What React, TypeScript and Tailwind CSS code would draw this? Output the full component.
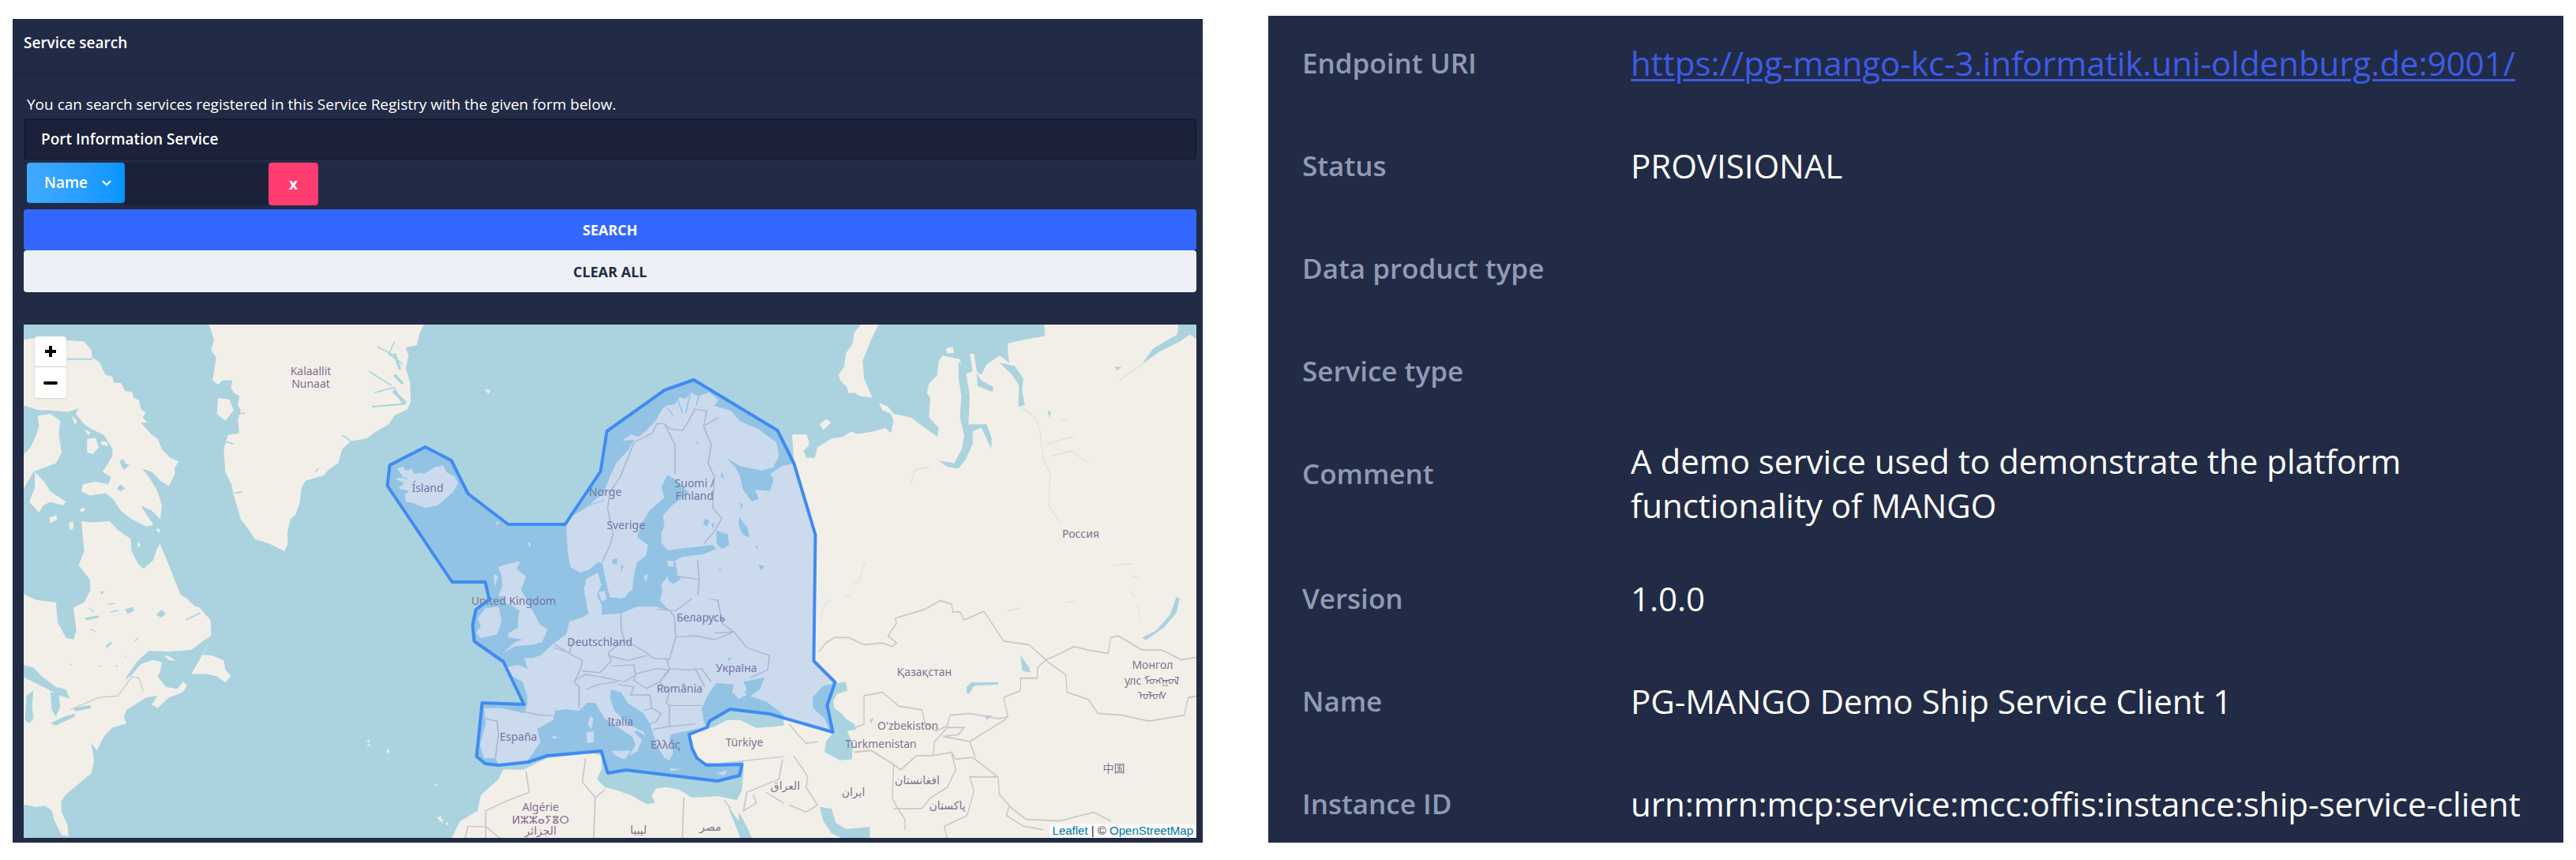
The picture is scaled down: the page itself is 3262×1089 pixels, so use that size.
import { ChevronDown, Minus, Plus } from "lucide-react";
import { clsx } from "clsx";

interface DetailRow {
  label: string;
  lines: string[];
  href?: string;
}

interface MapLabel {
  text: string;
  x: number;
  y: number;
}

const details: DetailRow[] = [
  {
    label: "Endpoint URI",
    lines: ["https://pg-mango-kc-3.informatik.uni-oldenburg.de:9001/"],
    href: "https://pg-mango-kc-3.informatik.uni-oldenburg.de:9001/",
  },
  { label: "Status", lines: ["PROVISIONAL"] },
  { label: "Data product type", lines: [] },
  { label: "Service type", lines: [] },
  {
    label: "Comment",
    lines: [
      "A demo service used to demonstrate the platform",
      "functionality of MANGO",
    ],
  },
  { label: "Version", lines: ["1.0.0"] },
  { label: "Name", lines: ["PG-MANGO Demo Ship Service Client 1"] },
  {
    label: "Instance ID",
    lines: ["urn:mrn:mcp:service:mcc:offis:instance:ship-service-client"],
  },
];

const mapLabels: MapLabel[] = [
  { text: "Kalaallit", x: 394, y: 475 },
  { text: "Nunaat", x: 394, y: 491 },
  { text: "Ísland", x: 542, y: 623 },
  { text: "Norge", x: 767, y: 628 },
  { text: "Sverige", x: 793, y: 670 },
  { text: "Suomi /", x: 880, y: 617 },
  { text: "Finland", x: 880, y: 633 },
  { text: "United Kingdom", x: 651, y: 766 },
  { text: "Беларусь", x: 888, y: 787 },
  { text: "Deutschland", x: 760, y: 818 },
  { text: "Україна", x: 933, y: 851 },
  { text: "România", x: 861, y: 877 },
  { text: "Italia", x: 786, y: 919 },
  { text: "España", x: 657, y: 938 },
  { text: "Ελλάς", x: 843, y: 948 },
  { text: "Türkiye", x: 943, y: 945 },
  { text: "Algérie", x: 685, y: 1027 },
  { text: "ⵍⵣⵣⴰⵢⴻⵔ", x: 685, y: 1043 },
  { text: "الجزائر", x: 685, y: 1057 },
  { text: "ليبيا", x: 809, y: 1056 },
  { text: "مصر", x: 900, y: 1052 },
  { text: "العراق", x: 995, y: 1000 },
  { text: "ایران", x: 1081, y: 1008 },
  { text: "افغانستان", x: 1162, y: 993 },
  { text: "پاکستان", x: 1200, y: 1025 },
  { text: "中国", x: 1411, y: 978 },
  { text: "Россия", x: 1369, y: 681 },
  { text: "Қазақстан", x: 1171, y: 856 },
  { text: "Монгол", x: 1460, y: 847 },
  { text: "улс ᠮᠣᠩᠭᠣᠯ", x: 1459, y: 867 },
  { text: "ᠤᠯᠤᠰ", x: 1460, y: 886 },
  { text: "O'zbekiston", x: 1150, y: 924 },
  { text: "Türkmenistan", x: 1116, y: 947 },
];

const LAND = "#f2efe9";
const SEA = "#aad3df";

function NorthAtlantic() {
  return (
    <g transform="translate(0 390) scale(0.35714 0.44643)">
      <g fill={LAND}>
        {/* Baffin Island and the Canadian arctic */}
        <path d="M80 90 120 86 240 92 300 95 325 120 328 140 355 155 375 190 400 195 405 212 430 212 445 235 470 238 475 255 495 262 500 285 518 298 508 310 524 325 500 325 540 360 560 370 575 400 605 425 635 435 620 455 622 470 600 505 570 490 540 465 505 455 530 480 560 520 575 560 570 600 540 575 500 560 545 615 520 620 470 600 430 575 400 540 375 525 320 532 290 520 295 500 340 492 385 500 395 480 365 465 385 440 400 420 400 400 370 360 330 345 300 330 270 300 280 285 240 295 180 290 140 290 80 275Z" />
        <path d="M135 305 180 300 215 320 210 360 220 410 200 440 150 455 120 465 80 520 80 420 110 395 130 360 140 335Z" />
        <path d="M125 465 160 495 180 520 235 550 225 560 180 550 155 560 140 580 105 550 125 510Z" />
        <path d="M310 372 340 368 352 395 330 415 310 410ZM175 595 200 588 205 600 180 610ZM245 610 260 605 262 625 250 630ZM358 378 380 380 385 392 362 388ZM285 570 300 566 302 576 288 578ZM255 305 275 320 268 332ZM300 345 322 352 315 362Z" />
        {/* mainland with Labrador, the Great Lakes and Florida */}
        <path d="M290 605 330 608 390 605 420 630 465 655 468 690 490 725 510 740 545 715 555 690 568 668 590 710 610 750 630 790 640 812 665 825 690 845 710 850 728 868 748 885 750 930 720 945 680 970 600 975 530 972 490 1000 455 1040 445 1055 470 1040 500 1010 545 998 575 1005 570 1030 560 1045 590 1075 630 1080 650 1060 665 1070 650 1090 600 1105 560 1135 540 1125 560 1100 520 1105 450 1140 440 1160 450 1178 400 1190 370 1215 345 1255 325 1235 335 1285 325 1320 280 1350 235 1380 218 1400 220 1430 240 1465 245 1498 220 1495 195 1455 185 1425 160 1412 130 1415 80 1408 80 810 130 828 200 835 205 890 235 935 262 940 272 915 262 850 300 835 322 800 320 770 280 730 300 690 295 650Z" />
        <path d="M745 945 720 985 750 985 795 1000 800 1025 820 1045 800 1062 770 1045 735 1038 680 1038 700 1010ZM580 985 600 988 625 1000 605 1000Z" />
        {/* Greenland */}
        <path d="M740 40 760 90 750 120 768 140 755 205 775 218 790 205 825 205 820 225 830 240 850 250 845 275 855 290 845 320 850 355 810 360 795 400 800 465 822 500 830 530 855 600 880 625 905 655 960 670 1010 690 1022 670 1020 640 1030 600 1050 585 1065 550 1070 510 1085 490 1150 475 1165 460 1200 440 1215 400 1245 378 1300 370 1340 348 1380 330 1400 305 1445 288 1458 265 1455 210 1440 170 1450 135 1440 112 1480 105 1490 70 1510 40ZM775 255 815 260 830 290 800 320 770 300Z" />
        <path d="M488 668 496 666 498 676 490 678ZM555 628 568 626 566 640ZM1300 1228 1312 1226 1310 1234ZM1372 1258 1382 1256 1380 1266ZM1550 1445 1566 1442 1564 1456Z" />
      </g>
      <g fill={SEA}>
        <path d="M80 1012 120 1020 150 1045 200 1075 235 1082 248 1108 215 1100 180 1085 130 1065 80 1045Z" />
        <path d="M95 1100 120 1085 115 1130 120 1165 105 1178 90 1170ZM180 1090 210 1095 215 1130 200 1160 185 1140ZM180 1178 220 1162 268 1150 265 1160 200 1184ZM262 1135 320 1126 325 1135 270 1144Z" />
        <path d="M425 435 440 428 445 440 460 445 440 460ZM415 512 430 500 445 512 428 520ZM555 870 575 855 590 868 572 878ZM445 855 470 848 478 858 455 868ZM300 880 350 872 352 878 310 886ZM375 960 395 945 398 952 380 965ZM355 805 370 802 366 812ZM250 805 275 798 268 812Z" />
      </g>
      <g fill="none" stroke={SEA} strokeWidth="4">
        <path d="M240 145 330 145M1340 110 1400 135M1400 95 1380 130 1430 160M1310 180 1390 220M1330 240 1400 225 1430 275M1320 280 1440 272M1120 465 1130 455M1215 360 1245 378M845 300 870 298M800 380 830 385M835 525 860 522M660 885 712 865" />
        <path
          d="M1400 130 1420 175M1400 190 1430 215M1395 235 1440 270"
          strokeWidth="9"
        />
        <path
          d="M315 850 335 862M390 862 420 858M480 945 492 935M445 990 450 985M350 1015 358 1018M410 1012 420 1018M320 910 340 918M250 1010 255 1012M385 840 410 838"
          strokeWidth="3"
        />
      </g>
      <path
        d="M250 1140 350 1105 420 1100 470 1045 495 1050 510 1090"
        fill="none"
        stroke="#cfc6c8"
        strokeWidth="3"
      />
    </g>
  );
}

function Scandinavia() {
  return (
    <g transform="translate(440 390) scale(0.3827 0.33333)">
      <g fill={LAND}>
        <path d="M165 610 185 603 195 618 215 610 222 632 240 625 255 630 290 605 318 598 330 625 355 640 368 665 350 700 300 750 260 760 215 740 195 735 190 710 205 695 170 685 190 665 160 650 185 640Z" />
        <path d="M725 830 745 790 790 760 850 700 870 640 890 590 930 540 950 500 910 505 940 480 965 490 990 465 1020 430 1030 410 1045 380 1060 370 1085 365 1100 340 1120 345 1140 320 1160 335 1200 320 1228 350 1215 372 1270 390 1300 430 1360 460 1420 510 1430 560 1410 605 1370 618 1300 600 1255 570 1285 605 1300 640 1310 690 1340 735 1362 725 1350 690 1400 695 1412 650 1400 630 1440 600 1480 590 1490 540 1475 480 1520 480 1530 510 1505 530 1520 570 1640 575 1640 1120 1040 1100 1045 1050 1060 1030 1100 1040 1085 960 1110 945 1180 935 1222 915 1210 900 1170 905 1120 912 1060 920 1040 890 1040 850 1050 830 1045 790 1075 750 1110 720 1130 700 1085 650 1060 635 1040 680 1050 720 1000 770 970 830 960 870 995 900 990 940 960 965 950 1010 940 1060 920 1100 870 1100 855 1030 845 970 830 965 800 995 770 1005 740 985 730 930Z" />
        <path d="M785 1090 790 1030 830 1005 838 1035 828 1090ZM500 985 540 970 575 962 560 990 592 1020 580 1060 545 1095 500 1095 520 1040ZM485 1010 500 1020 488 1060ZM598 890 608 893 604 912ZM490 812 505 815 497 825ZM985 1015 995 1012 990 1042ZM1058 960 1082 962 1078 985 1062 978ZM455 310 475 312 468 326Z" />
      </g>
      <g fill={SEA}>
        <path d="M1062 1000 1085 1005 1105 1030 1080 1048 1062 1035ZM1222 845 1260 860 1264 900 1240 915 1222 895ZM1298 795 1325 835 1332 872 1310 862 1295 825ZM880 955 895 950 892 975 875 970ZM905 980 915 975 908 1005ZM1360 975 1380 980 1372 998ZM1350 905 1360 902 1356 918ZM1185 800 1200 810 1190 830 1178 820ZM1205 820 1215 815 1212 840ZM1155 505 1165 510 1158 518ZM1240 620 1248 650 1236 640ZM1300 740 1310 745 1304 765ZM1230 990 1240 992 1233 1000Z" />
      </g>
      <g fill="none" stroke="#cdbfca" strokeWidth="4">
        <path d="M845 965 870 900 880 860 862 760 870 700 905 640 950 510 1010 475 1025 440 1050 440 1085 520 1085 630M1050 440 1070 460 1110 465 1130 430 1150 385 1190 390 1180 450 1205 520 1195 590 1215 640 1210 760 1240 800 1215 850 1180 895M1185 445 1230 415M1160 960 1165 1035 1160 1090M1095 1020 1160 1030" />
      </g>
      <path
        d="M1095 350 1110 400M1135 330 1120 400M1165 335 1155 370M1060 380 1080 410M930 450 950 480M960 440 965 470M800 750 850 730M170 640 200 650M240 600 245 630"
        fill="none"
        stroke={SEA}
        strokeWidth="4"
      />
    </g>
  );
}

function Asia() {
  return (
    <g transform="translate(1000 390) scale(0.35714 0.44643)">
      <g fill={LAND}>
        <path d="M-20 600 20 480 10 360 65 370 70 390 50 405 60 425 90 425 100 395 150 370 190 365 220 350 240 358 300 350 340 340 360 355 370 320 360 300 330 290 318 268 350 280 370 300 430 310 490 345 525 365 530 340 495 310 500 255 488 240 495 215 525 190 530 150 545 135 605 145 615 190 650 180 640 130 655 130 665 180 680 190 700 160 745 135 780 155 775 130 775 100 830 90 905 80 905 40 1500 40 1500 1520 -20 1520Z" />
        <path d="M260 40 320 40 290 90 260 150 265 200 295 255 250 250 230 240 210 242 205 225 180 205 175 190 195 165 200 130 225 100 230 70ZM108 330 130 315 148 325 120 346ZM555 115 580 110 583 128 560 128Z" />
      </g>
      <g fill={SEA}>
        <path d="M600 150 628 190 640 250 635 330 700 330 718 370 715 400 700 370 680 340 650 350 650 385 625 430 600 455 560 450 530 433 585 440 612 400 620 360 605 310 610 250 600 200Z" />
        <path d="M745 155 800 165 830 200 825 230 835 275 812 280 815 220 790 190ZM665 185 680 205 725 225 720 238 668 222Z" />
        <path d="M1372 820 1384 825 1372 865 1330 905 1265 942 1250 935 1300 915 1350 870ZM630 1095 628 1075 645 1062 742 1062 740 1068 655 1072 640 1092ZM1380 40 1446 40 1446 90 1420 75 1385 95 1310 125 1250 160 1290 115 1375 75ZM820 985 850 1020 855 1035 825 1028ZM690 1155 720 1156 700 1168ZM915 290 928 295 922 312ZM1155 165 1178 168 1160 178ZM285 1170 300 1160 290 1180Z" />
        {/* Caspian Sea and Persian Gulf */}
        <path d="M160 1065 200 1060 206 1085 170 1095 155 1115 160 1135 185 1150 200 1165 230 1180 238 1195 205 1200 225 1235 222 1280 180 1283 125 1260 130 1230 150 1210 125 1165 85 1135 82 1105 120 1072Z" />
        <path d="M108 1415 150 1420 165 1460 200 1478 285 1472 285 1520 185 1503 150 1490 120 1455Z" />
      </g>
      <g fill="none" stroke="#dbe5e2" strokeWidth="4">
        <path d="M820 280 870 310 890 350 900 430 925 470 920 560 960 610M915 385 1010 365M925 420 1000 405 1060 440M960 320 990 315M1170 205 1250 160M430 500 445 460 500 450M110 880 125 840 150 828M225 785 250 770 268 720M195 818 215 816M1215 760 1240 765M1210 800 1225 820M1235 840 1245 890M980 835 1010 832M770 860 820 850M1150 730 1220 725" />
      </g>
      <g fill="none" stroke="#cdc5c6" strokeWidth="4">
        <path d="M105 975 130 950 160 935 210 935 265 955 330 950 365 960 380 950 350 930 380 895 375 880 480 855 535 830 575 840 580 862 605 862 620 885 690 860 760 945 850 955 910 998 880 1020 880 1050 820 1050 820 1085 760 1105 775 1160 740 1165 640 1150 570 1155 560 1185 520 1200 480 1175 470 1140 390 1130 330 1090 265 1100 265 1180 235 1190" />
        <path d="M910 998 960 980 1010 960 1060 970 1130 980 1140 935 1165 930 1210 950 1250 970 1320 970 1390 998 1450 990M910 1000 980 1040 985 1090 1060 1110 1095 1150 1180 1155 1275 1172 1400 1155 1415 1105 1450 1100" />
        <path d="M230 1260 290 1255 370 1295 395 1310 450 1270 510 1270 575 1260 590 1280 650 1275 740 1330 745 1380 790 1420 840 1450 960 1455 1080 1430 1140 1455M370 1295 365 1390 385 1420 410 1450 410 1480M370 1420 470 1420 500 1390 560 1360 590 1310 575 1260M735 1330 640 1330 655 1370 630 1440 550 1470 560 1510M780 1410 770 1440 830 1470 900 1480M510 1270 515 1230 560 1190 620 1190 600 1210 545 1215 640 1230 660 1275M640 1230 700 1200 770 1165" />
        <path d="M0 1180 30 1210 60 1235 100 1230M15 1270 50 1310 65 1330 60 1360 100 1410 60 1430 0 1410" />
      </g>
    </g>
  );
}

function EuropeAndAfrica() {
  return (
    <g transform="translate(440 730) scale(0.40816 0.33333)">
      <g fill={LAND}>
        <path d="M745 120 735 40 780 10 790 30 775 70 790 110 790 145 850 140 900 115 960 115 1000 130 970 90 980 60 975 30 1000 -10 1420 -10 1420 400 1700 560 1700 1010 318 1010 350 930 405 890 415 830 470 770 485 730 470 715 460 690 425 690 412 640 430 560 425 500 480 500 552 520 560 480 558 450 545 400 500 370 490 345 530 335 560 350 550 310 575 310 600 300 640 255 680 220 690 170 730 155 750 140Z" />
        <path d="M480 -10 548 -10 540 50 575 130 600 185 622 200 605 250 570 260 520 265 485 290 520 250 545 240 500 230 500 215 530 195 530 165 535 130 510 110 490 100 482 60ZM430 120 470 115 480 170 465 220 415 235 400 215 415 190 405 160ZM810 -10 890 -10 885 50 850 85 825 70ZM780 60 800 55 805 85 790 95ZM920 0 928 0 925 20Z" />
        <path d="M285 925 298 922 296 935ZM305 940 315 930 312 945ZM60 640 72 636 70 645ZM120 660 130 658 128 668ZM270 790 282 790 278 798Z" />
      </g>
      {/* Mediterranean, Black Sea and Red Sea */}
      <g fill={SEA}>
        <path d="M465 712 520 708 560 700 600 630 590 580 640 545 645 510 680 505 720 510 745 480 770 480 800 540 850 580 885 610 895 640 875 680 900 665 915 620 890 590 900 585 925 605 920 590 870 560 830 510 815 460 820 430 850 440 870 480 920 520 940 560 950 600 960 640 985 690 1000 700 1012 670 1000 620 1005 600 1060 585 1090 575 1060 600 1065 620 1080 680 1110 705 1150 710 1180 705 1230 698 1230 740 1225 810 1210 850 1150 835 1070 840 1030 810 990 800 960 805 945 830 955 860 930 865 880 830 830 810 800 800 775 770 790 730 790 680 760 670 620 690 570 720 545 735 480 732Z" />
        <path d="M1115 580 1105 540 1100 500 1120 450 1145 405 1200 410 1195 440 1215 465 1240 430 1230 400 1295 383 1280 430 1250 455 1300 475 1360 530 1385 560 1330 570 1270 575 1220 545 1180 545 1140 570Z" />
        <path d="M1180 870 1195 895 1215 930 1215 895 1240 950 1262 1010 1225 1010 1200 930ZM1360 640 1380 636 1375 650Z" />
      </g>
      <g fill={LAND}>
        <path d="M820 662 880 662 862 695 835 682ZM742 592 765 588 765 630 745 632ZM755 528 764 540 758 582 747 560ZM1000 728 1040 732 1005 738ZM1145 748 1182 735 1170 755ZM635 605 655 610 642 618ZM1195 435 1225 425 1240 450 1215 465ZM985 600 1000 620 990 625Z" />
      </g>
      <g fill="none" stroke="#cdbfca" strokeWidth="4">
        <path d="M555 515 590 525 640 530M430 540 465 550 470 600 460 690M640 255 700 300 730 320 725 350 705 400 720 420 720 500M850 140 850 200 860 240 810 290 820 320 785 365 730 360M860 240 930 290 950 310 1000 315 1020 230 1015 150 1000 130M960 125 1020 130 1080 75 1150 90 1165 180 1200 210 1140 240 1080 225 1020 230M1140 215 1200 210 1240 270 1310 300 1305 355 1250 385M990 310 1000 350 1060 355 1100 350 1130 400M1080 350 1110 420M1000 350 970 400 1000 440M890 395 895 370 960 350 1000 355 970 400 930 425ZM820 340 890 335 895 375 860 400 780 380 740 372 705 395M640 270 690 290 700 240" />
        <path d="M810 300 870 320 930 300M840 410 890 420 880 450 940 450 945 500 920 510M1000 440 990 480 1000 490 1100 490M1000 490 1000 570 1080 560M950 580 1000 570M945 500 975 520 960 550 940 560M985 50 1080 75M1100 -10 1100 60 1080 75M740 430 780 410 840 400" />
        <path d="M555 740 565 820 500 850 430 890 430 1000M740 690 730 780 770 840 765 1000M800 810 770 840M1045 840 1040 1000M1230 700 1390 680 1350 700 1340 770 1240 820 1230 890 1270 860 1260 830M1300 820 1400 895 1450 895M1390 680 1420 730 1430 800 1455 840 1440 880 1500 960M365 1000 375 950 430 950 480 1000M1390 570 1400 640 1420 690M1170 850 1190 880" />
      </g>
      <g fill="#b9cfe0">
        <path d="M1180 308 1195 310 1185 320ZM1355 390 1375 350 1380 345 1362 392ZM1365 20 1375 18 1370 30Z" />
      </g>
    </g>
  );
}

function CoverageMap() {
  return (
    <svg
      viewBox="30 411 1486 650"
      preserveAspectRatio="xMidYMid slice"
      role="img"
      aria-label="Coverage area of the service"
      className="block h-[650px] w-full"
    >
      <rect x="30" y="411" width="1486" height="650" fill={SEA} />
      <NorthAtlantic />
      <EuropeAndAfrica />
      <Scandinavia />
      <Asia />
      <g
        fill="#86708e"
        textAnchor="middle"
        className="font-['Noto_Sans','DejaVu_Sans','Noto_Sans_CJK_SC',sans-serif] text-[14px]"
      >
        {mapLabels.map((label) => (
          <text key={label.text} x={label.x} y={label.y}>
            {label.text}
          </text>
        ))}
      </g>
      <path
        d="M539 566 572 583 593 625 644 664 716 664 761 597 769 546 842 494 879 481 985 545 1006 587 1033 677 1031 837 1058 864 1048 893 1055 927 975 904 925 898 899 913 896 921 873 930 877 948 883 960 895 969 940 968 937 982 909 989 793 975 770 979 762 951 693 957 669 965 632 969 615 967 604 958 611 890 664 892 638 838 601 812 599 792 603 772 620 759 615 737 573 737 491 615 494 589Z"
        fill="#3388ff"
        fillOpacity="0.2"
        stroke="#3f8bf2"
        strokeWidth="4"
        strokeLinejoin="round"
      />
    </svg>
  );
}

function SearchPanel() {
  return (
    <section className="min-w-0 flex-1 bg-[#222b45] text-[19px] text-white">
      <h1 className="border-b-2 border-[#1b2440] px-3.5 pt-3 pb-5 leading-9 font-semibold">
        Service search
      </h1>
      <form
        className="flex flex-col pt-5 pr-2 pl-3.5"
        onSubmit={(e) => e.preventDefault()}
      >
        <p className="px-1 pt-0.5 pb-0.5 leading-8">
          You can search services registered in this Service Registry with the
          given form below.
        </p>
        <input
          type="text"
          aria-label="Search query"
          defaultValue="Port Information Service"
          className="h-[52px] w-full rounded border-2 border-[#151b33] bg-[#1a2138] px-5 font-semibold text-white"
        />
        <div className="flex items-start px-1 pt-1">
          <div className="relative">
            <select
              aria-label="Search field"
              className="h-[51px] w-[124px] appearance-none rounded bg-linear-to-r from-[#42aaff] to-[#0095ff] px-[22px] font-semibold text-white"
            >
              <option>Name</option>
            </select>
            <ChevronDown
              className="pointer-events-none absolute top-[17px] right-3.5 size-[18px]"
              strokeWidth={3}
            />
          </div>
          <input
            type="text"
            aria-label="Field value"
            className="h-[54px] w-[182px] bg-[#1a2138] px-4 text-white"
          />
          <button
            type="button"
            aria-label="Remove field"
            className="h-[54px] w-[63px] rounded bg-[#ff3d71] font-bold"
          >
            x
          </button>
        </div>
        <button
          type="submit"
          className="mt-[5px] h-[52px] rounded bg-[#3366ff] text-lg font-bold"
        >
          SEARCH
        </button>
        <button
          type="button"
          className="h-[53px] rounded bg-[#edf1f7] text-lg font-bold text-[#222b45]"
        >
          CLEAR ALL
        </button>
      </form>
      <div className="pt-[41px] pr-2 pb-1.5 pl-3.5">
        <div className="relative overflow-hidden">
          <CoverageMap />
          <div className="absolute top-[15px] left-3.5 flex w-10 flex-col rounded bg-white text-black shadow">
            <button
              type="button"
              aria-label="Zoom in"
              className="flex h-[39px] items-center justify-center border-b border-[#cccccc]"
            >
              <Plus className="size-6" strokeWidth={4} strokeLinecap="butt" />
            </button>
            <button
              type="button"
              aria-label="Zoom out"
              className="flex h-[39px] items-center justify-center"
            >
              <Minus className="size-6" strokeWidth={4} />
            </button>
          </div>
          <div className="absolute right-0 bottom-0 bg-white/70 px-1 font-['Liberation_Sans',sans-serif] text-[15px] leading-[18px] text-[#333333]">
            <a href="#leaflet" className="text-[#0078a8]">
              Leaflet
            </a>{" "}
            | ©{" "}
            <a href="#osm" className="text-[#0078a8]">
              OpenStreetMap
            </a>
          </div>
        </div>
      </div>
    </section>
  );
}

function DetailsPanel() {
  return (
    <section className="min-w-0 flex-1 bg-[#222b45]">
      <dl className="flex flex-col leading-[56px]">
        {details.map((row) => (
          <div
            key={row.label}
            className="flex min-h-[130px] px-[43px] pb-[30px] last:min-h-0 last:pb-5"
          >
            <dt className="w-[416px] shrink-0 pt-8 text-[35px] font-semibold text-[#8f9bb3]">
              {row.label}
            </dt>
            <dd
              className={clsx(
                "text-[42px] whitespace-nowrap text-white",
                row.lines.length > 1 ? "pt-4" : "pt-8",
              )}
            >
              {row.href ? (
                <a
                  href={row.href}
                  className="text-[#3c5be8] underline decoration-[3px] underline-offset-4"
                >
                  {row.lines[0]}
                </a>
              ) : (
                row.lines.map((line) => <p key={line}>{line}</p>)
              )}
            </dd>
          </div>
        ))}
      </dl>
    </section>
  );
}

export default function App() {
  return (
    <main className="flex gap-[83px] bg-white px-4 pt-5 pb-[22px] font-['Open_Sans','Noto_Sans',sans-serif]">
      <div className="flex min-w-0 flex-[1507] pt-1">
        <SearchPanel />
      </div>
      <div className="flex min-w-0 flex-[1640]">
        <DetailsPanel />
      </div>
    </main>
  );
}
